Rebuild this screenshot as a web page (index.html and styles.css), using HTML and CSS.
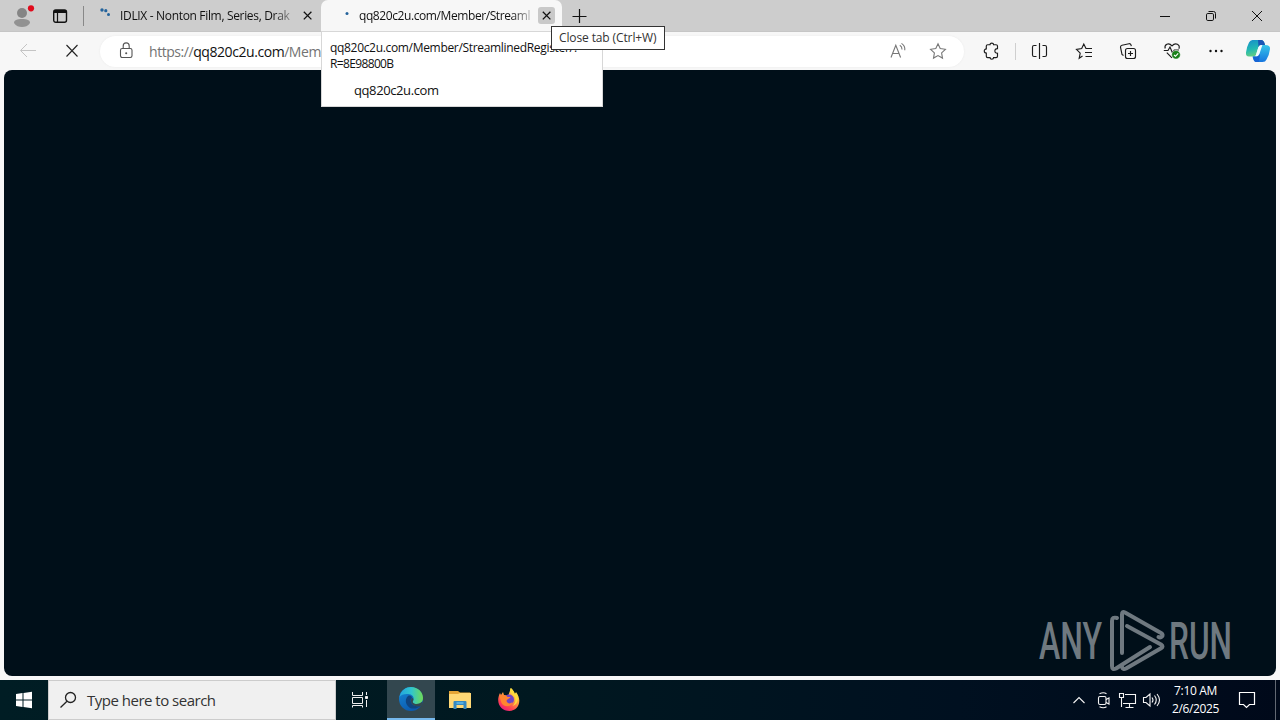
FILE: index.html
```html
<!DOCTYPE html>
<html lang="en">
<head>
<meta charset="utf-8">
<title>Browser desktop</title>
<link rel="stylesheet" href="styles.css">
</head>
<body>
<div class="desktop">
  <header class="tabstrip">
    <svg class="profile" width="32" height="32" viewBox="0 0 32 32"><circle cx="18" cy="13" r="5" fill="#858585"/><path d="M10 23c0-3 3-4 8-4s8 1 8 4c-2 3-5 4-8 4s-6-1-8-4z" fill="#929292"/><circle cx="27" cy="8.300" r="3.1" fill="#e00b1c"/></svg>
    <svg class="workspace" width="16" height="16" viewBox="0 0 16 16" fill="none" stroke="#111"><rect x="1.7" y="2" width="12.8" height="12.3" rx="2" stroke-width="1.4"/><path d="M2 3.5h12" stroke-width="3"/><path d="M5.5 5v9" stroke-width="1.2"/></svg>
    <span class="divider"></span>
    <div class="tab">
      <svg class="spinner" width="16" height="16" viewBox="0 0 16 16" fill="#24639b"><circle cx="4" cy="2" r="1.7"/><circle cx="7.800" cy="2.700" r="1.6"/><circle cx="10.500" cy="6.500" r="1.5"/></svg>
      <span class="tab-title first">IDLIX - Nonton Film, Series, Drak</span>
      <svg class="close" width="17" height="17" viewBox="0 0 17 17"><path d="M4.800 4.800l7.600 7.600M12.400 4.800L4.800 12.400"/></svg>
    </div>
    <div class="tab active">
      <svg class="spinner" width="16" height="16" viewBox="0 0 16 16" fill="#24639b"><circle cx="8" cy="3.6" r="1.5"/></svg>
      <span class="tab-title second">qq820c2u.com/Member/Streaml</span>
      <svg class="close hover" width="17" height="17" viewBox="0 0 17 17"><path d="M4.800 4.800l7.600 7.600M12.400 4.800L4.800 12.400"/></svg>
    </div>
    <svg class="newtab" width="16" height="16" viewBox="0 0 16 16"><path d="M8.500 1v14M1.500 8.500h14"/></svg>
    <div class="window-buttons">
      <svg width="46" height="32" viewBox="0 0 46 32"><path d="M18 16.500h10"/></svg>
      <svg width="46" height="32" viewBox="0 0 46 32"><rect x="18.500" y="13.500" width="7" height="7" rx="1.3"/><path d="M20.500 11.500h5a2 2 0 0 1 2 2v5"/></svg>
      <svg width="46" height="32" viewBox="0 0 46 32"><path d="M18 11l10 10M28 11L18 21"/></svg>
    </div>
  </header>

  <nav class="toolbar">
    <svg class="back" width="20" height="20" viewBox="0 0 20 20"><path d="M18 9.500H3M9 3L2.500 9.500 9 16"/></svg>
    <svg class="stop" width="16" height="16" viewBox="0 0 16 16"><path d="M2.500 2l11 11.500M13.500 2l-11 11.500"/></svg>
    <div class="address">
      <svg class="lock" width="16" height="18" viewBox="0 0 16 18"><rect x="2.500" y="6.500" width="11.500" height="9" rx="1.700"/><path d="M5.200 6.500V3.900a3 3 0 0 1 6 0v2.600"/><circle cx="8.200" cy="11.300" r=".5"/></svg>
      <span class="url">https://<b>qq820c2u.com</b>/Mem</span>
      <svg class="read" width="18" height="18" viewBox="0 0 18 18"><path d="M2 15.500L6.800 3.300l4.800 12.200M3.700 11.500H10"/><path d="M10.800 3.200c1.700 1 2.300 2.500 2.200 4.300M12.500 1.400c2.600 1.600 3.600 3.800 3.300 6.800"/></svg>
      <svg class="fav" width="18" height="18" viewBox="0 0 18 18"><path d="M9 1.800l2.200 4.800 5.200.7-3.800 3.600.9 5.200L9 13.600l-4.500 2.500.9-5.200-3.800-3.600 5.200-.7z"/></svg>
    </div>
    <div class="actions">
      <svg class="ext" width="18" height="18" viewBox="0 0 18 18"><path d="M5.700 2.700H8c0-2.200 3.600-2.200 3.600 0H14q1.500 0 1.500 1.200v2.700c-3.500-.3-3.500 5 0 4.600v3q0 1.400-1.500 1.400h-2.400c0 2.200-3.600 2.200-3.600 0H5.700q-1.400 0-1.400-1.400v-3.200c-2.700 0-2.700-4.100 0-4.100v-3q0-1.200 1.400-1.200z"/></svg>
      <span class="tool-divider"></span>
      <svg class="split" width="18" height="18" viewBox="0 0 18 18"><path d="M6.500 3.500H4Q2.500 3.500 2.500 5v8q0 1.500 1.500 1.500h2.500M12.500 3.500H15q1.500 0 1.500 1.500v8q0 1.500-1.500 1.500h-2.500M9.500 1v16"/></svg>
      <svg class="favs" width="18" height="18" viewBox="0 0 18 18"><path d="M11 6.600L8.800 2 6.700 6.600l-5.200.8 3.700 3.700-1 5.100L7.500 14M10.500 6.500h6.500M10 10.500h7M10.500 14.500H17"/></svg>
      <svg class="collections" width="18" height="18" viewBox="0 0 18 18"><rect x="6.500" y="6.500" width="10" height="10" rx="2"/><path d="M11.500 9v5M9 11.500h5M4.500 13.500L3 12.500 1.500 5.200Q1.300 3.600 3 3.200l7-1.500q1.500-.2 2 1.200l.3 1.300"/></svg>
      <svg class="health" width="18" height="18" viewBox="0 0 18 18"><path d="M2.200 6.500C1 2.500 5.500 0 9 3.800 12.500 0 17.500 2.500 15.900 6.800M3.800 10.700L9 15.800M.800 8.500H5L7 5l2.500 6L11.300 8H16"/><circle class="badge" cx="13" cy="12.800" r="4.300"/><path class="check" d="M11 13l1.500 1.300 2.700-3"/></svg>
      <svg class="more" width="18" height="18" viewBox="0 0 18 18"><circle cx="3.500" cy="9" r="1.2"/><circle cx="9" cy="9" r="1.2"/><circle cx="14.500" cy="9" r="1.2"/></svg>
      <svg class="copilot" width="26" height="26" viewBox="0 0 26 26">
        <defs><linearGradient id="cp1" x2=".3" y2="1"><stop stop-color="#168ccc"/><stop offset=".6" stop-color="#22b9b2"/><stop offset="1" stop-color="#65ce83"/></linearGradient><linearGradient id="cp2" x2="0" y2="1"><stop stop-color="#35c5e9"/><stop offset="1" stop-color="#1776df"/></linearGradient></defs>
        <path d="M7.500 2H16q3 0 4 5h-4q-2 0-2.500 2L11 17q-.7 1.500-3 1.500H4q-3.500 0-3-4Q2 8 4 4.500 5.200 2 7.500 2z" fill="url(#cp1)"/>
        <path d="M13 2h3q3 0 4 5h-4q-2 0-2.500 2z" fill="#1b55b5"/>
        <path d="M20 7q5.500 0 5 4-.7 6-3.500 10.500-1 2.500-4 2.500h-6q-3 0-4-5.500h2q2 0 3-3l2-5.500q1-3 3-3z" fill="url(#cp2)"/>
        <path d="M8 18.500h4l3-2.500-1 8h-3q-2 0-3-5.500z" fill="#1764d4"/>
        <path d="M13.300 9.500q1-2.500 3.300-2.500h.8l-3 9q-1 2.500-3.900 2.500z" fill="#f3fbff"/>
      </svg>
    </div>
  </nav>

  <main class="page">
    <svg class="watermark" width="200" height="68" viewBox="0 0 200 68">
      <g class="wordmark"><text x="4" y="53" textLength="63" lengthAdjust="spacingAndGlyphs">ANY</text><text x="134" y="53" textLength="63" lengthAdjust="spacingAndGlyphs">RUN</text></g>
      <g class="mark"><path d="M82 12q-5-1.500-5 3v45q0 4.500 4 2.500L115 41"/><path d="M87 47V8.500q0-3.500 3-2l36 20.500q3 2 .500 3.800-1.500 1-3 .2"/><path d="M92 20l34 18.500q3 2 0 3.800L91 62.500q-3 1.500-4-1.500"/></g>
    </svg>
  </main>

  <footer class="taskbar">
    <svg class="start" width="48" height="40" viewBox="0 0 48 40"><path fill="#fff" d="M16 14l6.500-1v6.500H16zM23.500 12.900L32 11.800v7.700h-8.500zM16 20.500h6.500V27L16 26zM23.500 20.500H32v7.700l-8.500-1.100z"/></svg>
    <div class="search"><svg width="18" height="20" viewBox="0 0 18 20"><circle cx="11.500" cy="7.500" r="5"/><path d="M8 11.200l-6.500 6.300"/></svg><span>Type here to search</span></div>
    <svg class="taskview" width="51" height="40" viewBox="0 0 51 40"><path d="M16.500 12v3.500h10V12M16.500 17.500h10v6h-10zM16.500 27.500v-2h10v2M30.500 12v3M30.500 20v7"/><path d="M29.500 16.500h2v2h-2z" fill="#fff"/></svg>
    <div class="edge-button"><svg width="26" height="26" viewBox="0 0 26 26">
      <defs><linearGradient id="e1"><stop stop-color="#23a4df"/><stop offset=".5" stop-color="#30c5ce"/><stop offset="1" stop-color="#70db55"/></linearGradient><linearGradient id="e2" x2=".5" y2="1"><stop stop-color="#1689d7"/><stop offset="1" stop-color="#0c5aae"/></linearGradient></defs>
      <circle cx="13" cy="13" r="12" fill="url(#e2)"/><path d="M1.500 11C3 4 8 1 13 1c7 0 12 5 12 11 0 4-3 6-6.500 6S14 16.500 15 15c2-4-1-7-5-7-4-.3-7 1-8.500 3z" fill="url(#e1)"/><path d="M10 10c-4 4-2 9 2 12 4 1.500 8 0 11-2-4 1-9 0-10-4-.8-2 0-3 1-3.700C14 10 12 9 10 10z" fill="#10447f"/><path d="M15 15c-1 1.500 1 3 3.500 3 2 0 4-.8 5.300-2 .8 1 .2 2.500-.8 4-4 1-9 0-10-4-.6-2 .3-3.200 1.800-3.900.8.800.8 2 .2 2.900z" fill="#34484f"/>
    </svg></div>
    <svg class="files" width="49" height="40" viewBox="0 0 49 40"><path d="M14 11h9l2 1.500h10V27H14z" fill="#e5a536"/><path d="M14 14h9l2-1h11v15H14z" fill="#ffd875"/><path d="M18.500 29v-7q0-1 1-1h11q1 0 1 1v7h-3v-4h-7v4z" fill="#3488c1"/><path d="M21.500 22h7v2h-7z" fill="#55aee1"/></svg>
    <svg class="firefox" width="49" height="40" viewBox="0 0 49 40">
      <defs><linearGradient id="f1" x1=".8" x2=".2" y2="1"><stop stop-color="#fff44f"/><stop offset=".45" stop-color="#ff9640"/><stop offset=".75" stop-color="#ff4052"/><stop offset="1" stop-color="#e31587"/></linearGradient></defs>
      <path d="M16 13l1 2 2-3 1 3 4 1 3-8c2 2 3 3 4 6l1-2c7 9 2 19-6.500 19S11 23 16 13z" fill="url(#f1)"/><circle cx="25" cy="19.500" r="5" fill="#7044c5"/><path d="M15.500 16c4-2 7-1 8 1h3c-1 2-4 2-4 4 1 3 4 3 6 1-1 5-8 6-11 1z" fill="#ff8530"/><path d="M26.500 8c-2 5 4.500 6 5 12 0 3-2 5-3 6 6-2 7-9 3-13l-1 1c-1-3-2-4-4-6z" fill="#ffdc3b"/>
    </svg>
    <div class="tray">
      <svg width="24" height="40" viewBox="0 0 24 40"><path d="M5.500 23l5.500-5.500 5.500 5.500"/></svg>
      <svg width="24" height="40" viewBox="0 0 24 40"><rect x="6.500" y="16.500" width="7.500" height="8" rx="1.500"/><path d="M14 19.500l3-1.500v6l-3-1.500M7.500 13.800q4-2 7 0M7.500 26.800q4 2 7 0"/></svg>
      <svg width="24" height="40" viewBox="0 0 24 40"><path d="M9 14.500h10.500v9H7M3.500 13.500h4v4h-4zM5.500 17.500v9.500M13.500 24v3M9.500 27.500h8"/></svg>
      <svg width="24" height="40" viewBox="0 0 24 40"><path d="M3.500 17.500H6L10 14v12l-4-3.500H3.500zM12 17.500q2 2.500 0 5M14.500 15.500q3.500 4.500 0 9M17 14q5 6 0 12"/></svg>
    </div>
    <div class="clock"><span>7:10 AM</span><span class="date">2/6/2025</span></div>
    <svg class="notification" width="20" height="20" viewBox="0 0 20 20"><path d="M2.500 2.500h15v12h-5l-3 3-3-3h-4z"/></svg>
    <span class="peek"></span>
  </footer>

  <aside class="tabcard"><div class="card-title"><span class="line-one">qq820c2u.com/Member/StreamlinedRegister/?</span><span class="line-two">R=8E98800B</span></div><div class="domain">qq820c2u.com</div></aside>
  <div class="tooltip"><span>Close tab (Ctrl+W)</span></div>
</div>
</body>
</html>
```
FILE: styles.css
```css
* { box-sizing: border-box; }
body { margin: 0; overflow: hidden; font-family: "Open Sans", "Noto Sans", sans-serif; font-size: 12px; color: #111; }
svg { display: block; flex: none; }
.desktop { position: relative; width: 1280px; height: 720px; background: #f7f7f7; display: flex; flex-direction: column; }
.tabstrip { height: 32px; background: #cdcdcd; display: flex; align-items: center; flex: none; border-bottom: 1px solid #c6c6c6; }
.profile { margin-left: 4px; }
.workspace { margin-left: 16px; }
.divider { width: 1px; height: 20px; background: #888; margin-left: 15px; }
.tab { width: 237px; height: 32px; display: flex; align-items: center; padding-left: 14px; }
.tab.active { width: 241px; background: #f7f7f7; border-radius: 7px 7px 0 0; padding-left: 18px; }
.spinner { align-self: flex-start; margin-top: 8px; }
.tab.active .spinner { margin-top: 10px; }
.tab-title { width: 174px; margin-left: 6px; white-space: nowrap; line-height: 18px; mask-image: linear-gradient(90deg, #000 88%, #0003 100%); }
.tab.active .tab-title { width: 173px; margin-left: 4px; }
.first { letter-spacing: -.33px; }
.second { letter-spacing: -.41px; }
.close { margin-left: 5px; stroke: #111; stroke-width: 1.3; fill: none; }
.close.hover { background: #c9c9c9; border-radius: 3px; margin-left: 6px; }
.newtab { margin-left: 9px; stroke: #111; stroke-width: 1.2; fill: none; }
.window-buttons { margin-left: auto; display: flex; fill: none; stroke: #111; stroke-width: 1; }

.toolbar { height: 38px; display: flex; align-items: center; padding-left: 18px; flex: none; fill: none; }
.toolbar svg { fill: none; }
.back { stroke: #c4c4c4; }
.stop { margin-left: 26px; stroke: #222; stroke-width: 1.1; }
.address { width: 864px; height: 31px; margin-left: 20px; background: #fff; border-radius: 16px; display: flex; align-items: center; padding-left: 18px; box-shadow: 0 0 2px #e8e8e8; }
.lock { stroke: #555; stroke-width: 1.1; }
.url { font-size: 14px; color: #737373; margin-left: 15px; white-space: nowrap; letter-spacing: -.44px; }
.url b { color: #111; font-weight: 400; }
.read { margin-left: auto; stroke: #777; stroke-width: 1.1; }
.fav { margin: 0 17px 0 22px; stroke: #777; stroke-width: 1.1; }
.actions { display: flex; align-items: center; margin-left: 18px; stroke: #1c1c1c; stroke-width: 1.15; }
.tool-divider { height: 17px; width: 1px; background: #cfcfcf; margin-left: 15px; }
.split { margin-left: 14px; }
.favs { margin-left: 27px; }
.collections, .health, .more { margin-left: 26px; }
.more circle { fill: #111; stroke: none; }
.toolbar .badge { fill: #198019; stroke: #f7f7f7; stroke-width: .5; }
.check { stroke: #fff; }
.copilot { margin-left: 20px; stroke: none; }

.page { height: 606px; margin: 0 4px 4px; border-radius: 8px; background: #000f19; flex: none; display: flex; justify-content: flex-end; align-items: flex-end; padding: 0 41px 2px 0; }
.watermark { overflow: visible; }
.wordmark { font: 500 52px Roboto, sans-serif; fill: #6f7980; }
.mark { fill: none; stroke: #6f7980; stroke-width: 4; stroke-linejoin: round; stroke-linecap: round; }

.taskbar { height: 40px; display: flex; align-items: center; background: linear-gradient(90deg, #001d24, #001820 42%, #001020 75%, #00091a); color: #fff; flex: none; }
.search { width: 288px; height: 40px; background: #f0f0f0; border: 1px solid #ccc; display: flex; align-items: center; color: #333; font-size: 15px; letter-spacing: -.5px; }
.search svg { margin-left: 10px; fill: none; stroke: #222; stroke-width: 1.3; }
.search span { margin-left: 10px; white-space: nowrap; }
.taskview { fill: none; stroke: #eee; }
.edge-button { width: 48px; height: 40px; display: flex; align-items: center; justify-content: center; background: #33474f; border-bottom: 2px solid #76b9ed; }
.tray { display: flex; margin-left: auto; fill: none; stroke: #f4f4f4; stroke-width: 1.1; }
.clock { width: 63px; display: flex; flex-direction: column; align-items: center; line-height: 18px; font-size: 12px; letter-spacing: -.35px; }
.date { letter-spacing: -.35px; }
.notification { margin: 0 18px 0 10px; fill: none; stroke: #fff; stroke-width: 1.2; }
.peek { width: 5px; height: 40px; border-left: 1px solid #626873; }

.tabcard { position: absolute; left: 321px; top: 31px; width: 282px; height: 76px; padding: 8px 8px; background: #fff; border: 1px solid #d7d7d7; }
.card-title { display: flex; flex-direction: column; line-height: 16px; white-space: nowrap; }
.line-one { letter-spacing: -.32px; }
.line-two { letter-spacing: -.64px; }
.domain { margin: 9px 0 0 24px; line-height: 18px; font-size: 13px; letter-spacing: -.4px; }
.tooltip { position: absolute; left: 551px; top: 26px; width: 114px; height: 24px; padding-left: 7px; background: #fff; border: 1px solid #333; color: #333; line-height: 22px; letter-spacing: -.12px; white-space: nowrap; }
```
